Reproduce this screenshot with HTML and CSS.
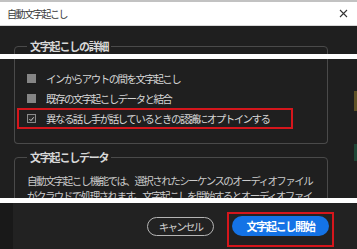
FILE: index.html
```html
<!DOCTYPE html>
<html lang="ja">
<head>
    <meta charset="UTF-8">
    <meta name="viewport" content="width=device-width, initial-scale=1.0">
    <title>自動文字起こし</title>
    <link rel="stylesheet" href="styles.css">
</head>
<body>
    <div class="titlebar">
        <span class="title">自動文字起こし</span>
        <svg class="close" width="9" height="9" viewBox="0 0 9 9">
            <path d="M1 1 L8 8 M8 1 L1 8" stroke="#333" stroke-width="1.1" fill="none"/>
        </svg>
    </div>

    <section class="strip strip-head">
        <fieldset class="group group-head">
            <legend>文字起こしの詳細</legend>
        </fieldset>
    </section>

    <section class="strip strip-body">
        <div class="group group-cont">
            <label class="check-row">
                <span class="box"></span>インからアウトの間を文字起こし
            </label>
            <label class="check-row">
                <span class="box"></span>既存の文字起こしデータと結合
            </label>
            <label class="check-row marked">
                <span class="box checked">
                    <svg width="9" height="9" viewBox="0 0 9 9">
                        <path d="M1.8 4.6 L3.8 6.6 L7.3 2.4" stroke="#e0e0e0" stroke-width="1.2" fill="none"/>
                    </svg>
                </span>異なる話し手が話しているときの認識にオプトインする
            </label>
        </div>

        <fieldset class="group group-data">
            <legend>文字起こしデータ</legend>
            <p>自動文字起こし機能では、選択されたシーケンスのオーディオファイルがクラウドで処理されます。文字起こしを開始するとオーディオファイル</p>
        </fieldset>
    </section>

    <section class="strip strip-foot">
        <button class="btn-cancel">キャンセル</button>
        <span class="marked-btn">
            <button class="btn-primary">文字起こし開始</button>
        </span>
    </section>
</body>
</html>
```

FILE: styles.css
```css
body {
    margin: 0;
    background-color: #fff;
    font-family: "Noto Sans CJK JP", "Noto Sans", sans-serif;
    color: #cfcfcf;
    width: 357px;
    height: 249px;
    overflow: hidden;
}

/* タイトルバー */
.titlebar {
    display: flex;
    align-items: center;
    justify-content: space-between;
    height: 23px;
    border-top: 2px solid #c2c2c2;
    padding: 0 9px 0 7px;
    background-color: #fff;
    border-bottom: 1px solid #d8d8d8;
}
.title {
    font-size: 10px;
    letter-spacing: -1.4px;
    color: #3a3a3a;
}
.close {
    margin-top: -1px;
}

/* 切り出した帯 */
.strip {
    background-color: #1f1f1f;
    overflow: hidden;
}
.strip-head {
    height: 15px;
    padding-top: 13px;
}
.strip-body {
    height: 139px;
    margin-top: 5px;
    background: linear-gradient(to bottom, transparent 32px, #5e5126 32px, #5e5126 52px, transparent 52px, transparent 85px, #1f4636 85px, #1f4636 102px, transparent 102px) right top / 3px 100% no-repeat, #1f1f1f;
}
.strip-foot {
    height: 38px;
    margin-top: 5px;
    padding: 9px 23px 0 0;
    display: flex;
    justify-content: flex-end;
    align-items: flex-start;
    gap: 13px;
    background: linear-gradient(to right, #191919 13px, #222 13px);
}

/* グループ枠 */
.group {
    margin: 0 0 0 14px;
    border: 1px solid #4a4a4a;
    border-radius: 4px;
    padding: 0 12px;
    box-sizing: border-box;
    width: 314px;
}
.group legend {
    padding: 0 3px;
    font-size: 11px;
    line-height: 14px;
    font-weight: bold;
    letter-spacing: -1.2px;
    color: #d8d8d8;
}
.group-head {
    height: 40px;
}
.group-cont {
    border-top: none;
    border-radius: 0 0 4px 4px;
    height: 85px;
    padding: 9px 0 0;
    display: flex;
    flex-direction: column;
}
.group-data {
    margin-top: 6px;
    height: 80px;
}
.group-data p {
    margin: 9px 0 0;
    font-size: 10.5px;
    line-height: 15px;
    letter-spacing: -1.55px;
    color: #cbcbcb;
}

/* チェックボックス行 */
.check-row {
    display: flex;
    align-items: center;
    gap: 10px;
    width: 274px;
    height: 16px;
    margin-left: 2px;
    padding-left: 8px;
    border: 2px solid transparent;
    box-sizing: content-box;
    font-size: 10.5px;
    letter-spacing: -1.55px;
    color: #d6d6d6;
}
.check-row.marked {
    border-color: #d5161c;
    height: 17px;
    width: 264px;
}
.box {
    flex: none;
    width: 9px;
    height: 9px;
    background-color: #858585;
    box-sizing: border-box;
}
.box.checked {
    background-color: #2a2a2a;
    border: 1px solid #8a8a8a;
    display: flex;
    align-items: center;
    justify-content: center;
}
.box.checked svg {
    width: 8px;
    height: 8px;
}

/* ボタン */
.btn-cancel {
    margin-top: 5px;
    width: 67px;
    height: 19px;
    border: 1.5px solid #b5b5b5;
    border-radius: 10px;
    background: transparent;
    color: #cfcfcf;
    font-family: inherit;
    font-size: 10.5px;
    letter-spacing: -1.8px;
    padding: 0;
}
.marked-btn {
    display: block;
    border: 2px solid #d5161c;
    padding: 2px 3px 9px 3px;
}
.btn-primary {
    display: block;
    width: 97px;
    height: 20px;
    border: none;
    border-radius: 10px;
    background-color: #1473e6;
    color: #fff;
    font-family: inherit;
    font-size: 11px;
    font-weight: bold;
    letter-spacing: -1.3px;
    padding: 0;
}
```
